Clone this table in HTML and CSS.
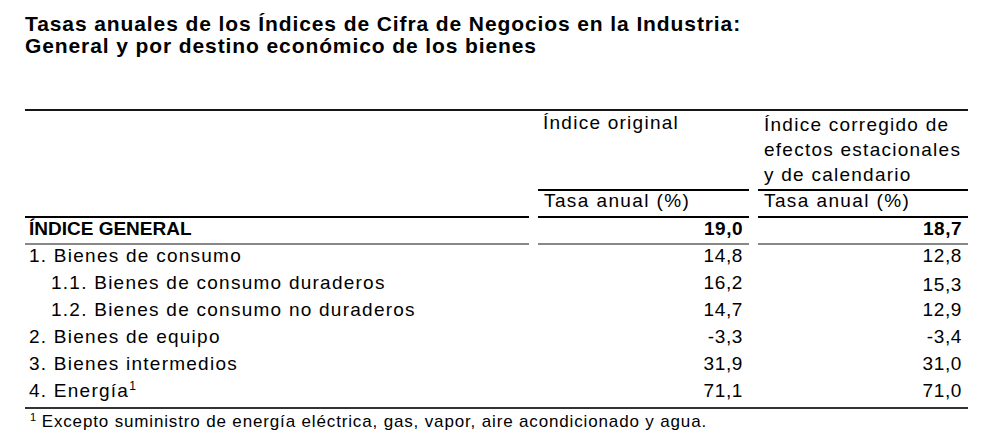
FILE: index.html
```html
<!DOCTYPE html>
<html lang="es">
<head>
<meta charset="utf-8">
<title>Tasas anuales ICN</title>
<link rel="stylesheet" href="styles.css">
</head>
<body>
<div class="page">
  <h1 class="title">Tasas anuales de los Índices de Cifra de Negocios en la Industria:<br>General y por destino económico de los bienes</h1>
  <div class="tbl">
    <div class="c hd-blank"></div>
    <div class="c hd hd-orig">Índice original</div>
    <div class="c hd hd-corr">Índice corregido de<br>efectos estacionales<br>y de calendario</div>
    <div class="c sub">Tasa anual (%)</div>
    <div class="c sub">Tasa anual (%)</div>

    <div class="c tot lbl">ÍNDICE GENERAL</div>
    <div class="c tot num">19,0</div>
    <div class="c tot num">18,7</div>

    <div class="c row lbl">1. Bienes de consumo</div>
    <div class="c row num">14,8</div>
    <div class="c row num">12,8</div>

    <div class="c row lbl ind">1.1. Bienes de consumo duraderos</div>
    <div class="c row num">16,2</div>
    <div class="c row num low">15,3</div>

    <div class="c row lbl ind">1.2. Bienes de consumo no duraderos</div>
    <div class="c row num">14,7</div>
    <div class="c row num">12,9</div>

    <div class="c row lbl">2. Bienes de equipo</div>
    <div class="c row num">-3,3</div>
    <div class="c row num">-3,4</div>

    <div class="c row lbl">3. Bienes intermedios</div>
    <div class="c row num">31,9</div>
    <div class="c row num">31,0</div>

    <div class="c row lbl">4. Energía<sup class="sup">1</sup></div>
    <div class="c row num">71,1</div>
    <div class="c row num">71,0</div>
  </div>
  <p class="note"><sup class="nsup">1</sup> Excepto suministro de energía eléctrica, gas, vapor, aire acondicionado y agua.</p>
</div>
</body>
</html>
```
FILE: styles.css
```css
html, body {
  margin: 0;
  padding: 0;
  background: #ffffff;
  color: #000000;
  font-family: "Liberation Sans", Arial, sans-serif;
}

.page {
  padding-left: 25px;
}

.title {
  margin: 0;
  padding-top: 13px;
  font-size: 21px;
  line-height: 22px;
  font-weight: bold;
  letter-spacing: 0.9px;
}

.tbl {
  margin-top: 52px;
  width: 943px;
  display: grid;
  grid-template-columns: 504px 211px 210px;
  grid-template-rows: 80px 27px 27px repeat(6, 27px);
  column-gap: 9px;
  border-top: 2px solid #161616;
  border-bottom: 2px solid #333333;
  font-size: 19px;
  letter-spacing: 1.25px;
}

.c {
  box-sizing: border-box;
  white-space: nowrap;
}

.hd-blank {
  grid-row: span 2;
  border-bottom: 2px solid #000;
}

.hd {
  border-bottom: 2px solid #000;
  padding-left: 5px;
}

.hd-orig {
  line-height: 23px;
}

.hd-corr {
  padding-top: 1px;
  line-height: 25px;
  padding-left: 6px;
}

.sub {
  line-height: 20px;
  padding-left: 6px;
  border-bottom: 2px solid #000;
  letter-spacing: 1.4px;
}

.tot {
  font-weight: bold;
  letter-spacing: 0;
  line-height: 21px;
  border-bottom: 2px solid #888888;
}

.row {
  line-height: 21px;
}

.lbl {
  padding-left: 4px;
}

.lbl.ind {
  padding-left: 26px;
}

.num {
  text-align: right;
  padding-right: 6px;
  letter-spacing: 0.6px;
}

.tot.num {
  letter-spacing: 0.5px;
}

.num.low {
  padding-top: 2px;
}

.sup {
  font-size: 12px;
  letter-spacing: 0;
  vertical-align: 7px;
  line-height: 0;
}

.note {
  margin: 0;
  padding-top: 3px;
  padding-left: 5px;
  font-size: 17px;
  line-height: 20px;
  letter-spacing: 0.85px;
}

.nsup {
  font-size: 11px;
  vertical-align: 6px;
  line-height: 0;
  letter-spacing: 0;
}
```
